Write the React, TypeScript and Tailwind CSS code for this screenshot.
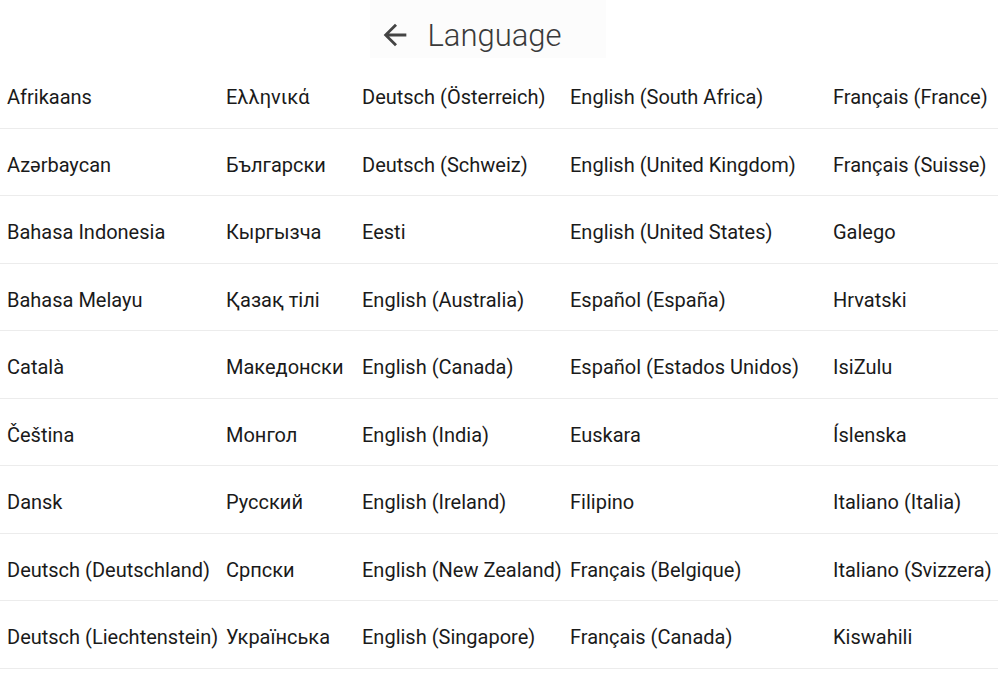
const columns: { width: string; items: string[] }[] = [
  {
    width: "w-[219px]",
    items: [
      "Afrikaans",
      "Azərbaycan",
      "Bahasa Indonesia",
      "Bahasa Melayu",
      "Català",
      "Čeština",
      "Dansk",
      "Deutsch (Deutschland)",
      "Deutsch (Liechtenstein)",
    ],
  },
  {
    width: "w-[136px]",
    items: ["Ελληνικά", "Български", "Кыргызча", "Қазақ тілі", "Македонски", "Монгол", "Русский", "Српски", "Українська"],
  },
  {
    width: "w-[208px]",
    items: [
      "Deutsch (Österreich)",
      "Deutsch (Schweiz)",
      "Eesti",
      "English (Australia)",
      "English (Canada)",
      "English (India)",
      "English (Ireland)",
      "English (New Zealand)",
      "English (Singapore)",
    ],
  },
  {
    width: "w-[263px]",
    items: [
      "English (South Africa)",
      "English (United Kingdom)",
      "English (United States)",
      "Español (España)",
      "Español (Estados Unidos)",
      "Euskara",
      "Filipino",
      "Français (Belgique)",
      "Français (Canada)",
    ],
  },
  {
    width: "flex-1",
    items: [
      "Français (France)",
      "Français (Suisse)",
      "Galego",
      "Hrvatski",
      "IsiZulu",
      "Íslenska",
      "Italiano (Italia)",
      "Italiano (Svizzera)",
      "Kiswahili",
    ],
  },
];

function BackArrow() {
  return (
    <svg viewBox="0 0 24 24" className="h-[34px] w-[34px] shrink-0" fill="#444444">
      <path d="M20 11H7.83l5.59-5.59L12 4l-8 8 8 8 1.41-1.41L7.83 13H20v-2z" />
    </svg>
  );
}

export default function App() {
  return (
    <main className="min-h-screen w-[1000px] bg-white font-['Roboto','Noto_Sans',sans-serif]">
      <header className="flex h-[61px] items-start justify-center pr-[24px]">
        <div className="flex h-[58px] items-center gap-[15px] bg-[#fcfcfc] pl-[8px] pr-[44px] pt-[12px]">
          <BackArrow />
          <h1 className="text-[31px] font-light leading-none text-[#3a3a3a]">Language</h1>
        </div>
      </header>

      <div className="flex pr-[2px]">
        {columns.map((col, ci) => (
          <ul key={ci} className={col.width}>
            {col.items.map((item) => (
              <li
                key={item}
                className="flex h-[67.5px] items-center whitespace-nowrap border-b border-[#ececec] pl-[7px] pt-[6px] text-[20px] text-[#1a1a1a]"
              >
                {item}
              </li>
            ))}
          </ul>
        ))}
      </div>
    </main>
  );
}
